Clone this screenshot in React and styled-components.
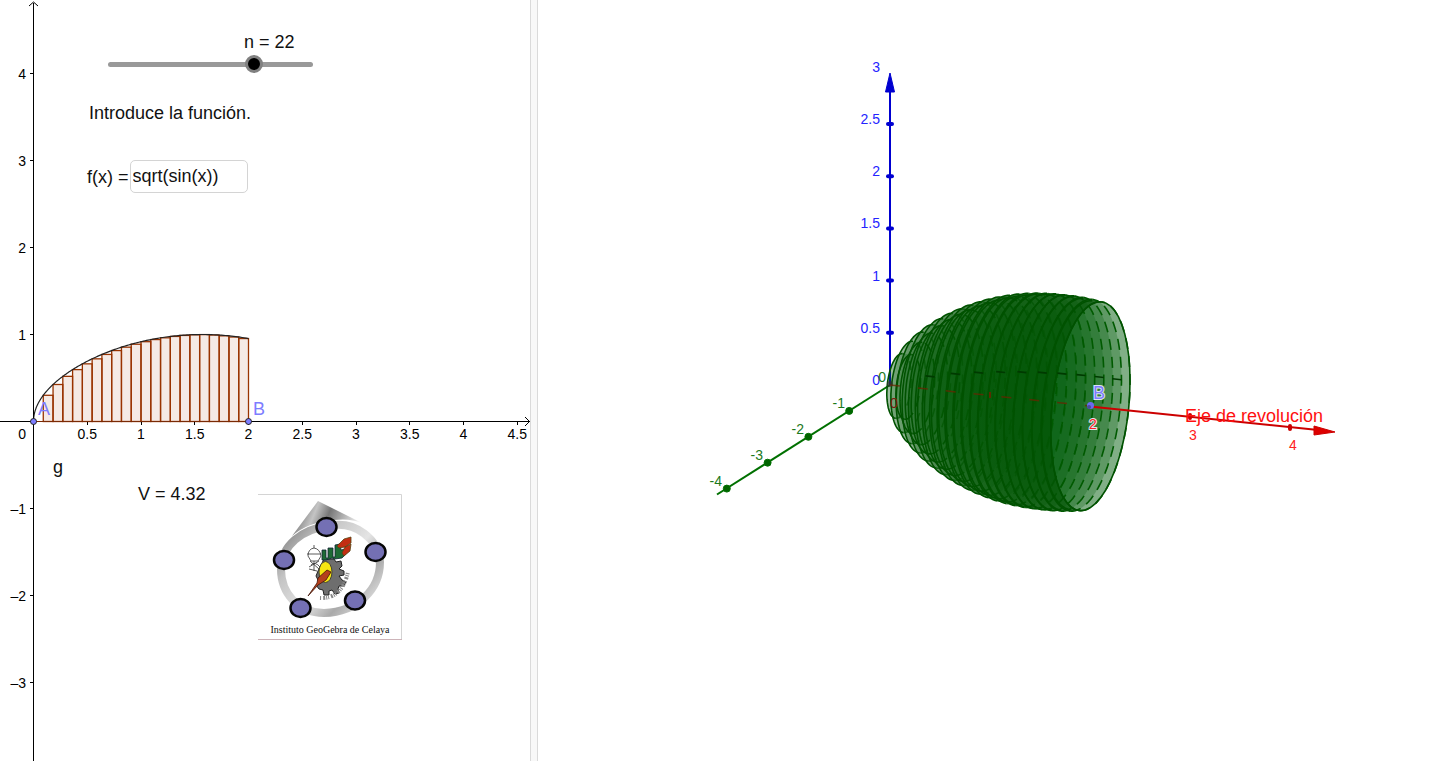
import { useState } from "react";
import styled, { createGlobalStyle } from "styled-components";

const GlobalStyle = createGlobalStyle`
	body {
		margin: 0;
		background: #fff;
		font-family: "Liberation Sans", Arial, sans-serif;
		font-size: 18px;
		line-height: 20px;
		color: #111;
	}
`;

const END = 2;
const f = (x) => Math.sqrt(Math.max(Math.sin(x), 0));

// h: height of the lower sum bar, r: radius of the disc
const getSteps = (n) =>
	Array.from({ length: n }, (_, i) => {
		const from = (END * i) / n;
		const to = (END * (i + 1)) / n;
		return { from, to, h: Math.min(f(from), f(to)), r: f(from) };
	});

const px = (x) => 33.5 + x * 107.5;
const py = (y) => 421.5 - y * 87;

const PlaneGraph = ({ steps }) => {
	const curve = Array.from({ length: 201 }, (_, i) => {
		const x = END * (i / 200) ** 2;
		return `${px(x).toFixed(2)},${py(f(x)).toFixed(2)}`;
	}).join(" ");
	return (
		<Canvas role='img' aria-label='g'>
			<g fill='#993300' fillOpacity='0.1' stroke='#993300' strokeWidth='1.3'>
				{steps.map(({ from, to, h }) => (
					<rect
						key={from}
						x={px(from)}
						y={py(h)}
						width={px(to) - px(from)}
						height={h * 87}
					/>
				))}
			</g>
			<polyline points={curve} fill='none' stroke='#222' strokeWidth='1.2' />
			<g stroke='#000' fill='none'>
				<path d='M33.5 3V761M0 421.5H530' shapeRendering='crispEdges' />
				<path d='M29 6L33.5 2L38 6M525 417L529.5 421.5L525 426' />
				{[-3, -2, -1, 1, 2, 3, 4].map((v) => (
					<path key={v} d={`M30 ${py(v)}h3`} shapeRendering='crispEdges' />
				))}
				{[1, 2, 3, 4, 5, 6, 7, 8, 9].map((v) => (
					<path key={v} d={`M${px(v / 2)} 422v3`} shapeRendering='crispEdges' />
				))}
			</g>
			<line x1='33' x2='249' y1='421.5' y2='421.5' stroke='#7a2a05' />
			<AxisText fill='#000' textAnchor='end'>
				{[-3, -2, -1, 1, 2, 3, 4].map((v) => (
					<text key={v} x='26' y={py(v) + 5}>
						{v < 0 ? `–${-v}` : v}
					</text>
				))}
				<text x='26' y='439'>
					0
				</text>
			</AxisText>
			<AxisText fill='#000' textAnchor='middle'>
				{[1, 2, 3, 4, 5, 6, 7, 8, 9].map((v) => (
					<text key={v} x={px(v / 2)} y='439'>
						{v / 2}
					</text>
				))}
			</AxisText>
			<g fill='#7d7dff' stroke='#222'>
				<circle cx='33.5' cy='421.5' r='3' />
				<circle cx='248.5' cy='421.5' r='3' />
			</g>
			<PointText fill='#7d7dff'>
				<text x='38' y='415'>
					A
				</text>
				<text x='253' y='415'>
					B
				</text>
			</PointText>
		</Canvas>
	);
};

// screen position of a space point
const project = (x, y, z) => [
	352 + x * 100.2 + y * 40.8,
	385 + x * 10.6 - y * 25.9 - z * 104.4,
];

const arc = (x, r, a, b) => {
	const pts = [];
	for (let i = 0; i <= 48; i++) {
		const t = a + ((b - a) * i) / 48;
		const [u, v] = project(x, r * Math.cos(t), r * Math.sin(t));
		pts.push(`${u.toFixed(1)} ${v.toFixed(1)}`);
	}
	return pts;
};

// angles at which the outline of a cylinder touches its rings
const TOP = 1.289;
const BOTTOM = TOP + Math.PI;

const hull = ({ from, to, r }) =>
	`M${[...arc(from, r, TOP, BOTTOM), ...arc(to, r, BOTTOM - 2 * Math.PI, TOP)].join("L")}Z`;
const line = (pts) => `M${pts.join("L")}`;

const Solid = ({ steps }) => {
	const drawn = steps.filter((s) => s.r > 0);
	const last = drawn[drawn.length - 1];
	const mouth = line(arc(last.to, last.r, 0, 2 * Math.PI)) + "Z";
	return (
		<g>
			<defs>
				<linearGradient
					id='depth'
					gradientUnits='userSpaceOnUse'
					x1='352'
					y1='0'
					x2='552'
					y2='0'
				>
					<stop offset='0' stopColor='#005000' stopOpacity='0.15' />
					<stop offset='0.35' stopColor='#025404' stopOpacity='0.6' />
					<stop offset='0.6' stopColor='#025404' stopOpacity='0.75' />
					<stop offset='1' stopColor='#025404' stopOpacity='0.75' />
				</linearGradient>
				<mask id='outside'>
					<rect width='900' height='763' fill='#fff' />
					<path d={mouth} fill='#000' />
				</mask>
				<clipPath id='body'>
					{drawn.map((s) => (
						<path key={s.from} d={hull(s)} />
					))}
				</clipPath>
			</defs>
			{drawn.map((s) => (
				<path key={s.from} d={hull(s)} fill='#055f10' fillOpacity='0.27' />
			))}
			<path d={mouth} fill='#055f10' fillOpacity='0.32' />
			<g fill='none' stroke='#005a00' strokeWidth='1.6'>
				{drawn.map((s) => (
					<path
						key={s.from}
						d={line(arc(s.to, s.r, TOP - Math.PI, TOP))}
						strokeDasharray='11 7'
					/>
				))}
				{drawn.slice(0, -4).map((s) => (
					<path
						key={s.from}
						d={line(arc(s.from, s.r, TOP - Math.PI, TOP))}
						strokeDasharray='9 9'
						strokeOpacity='0.7'
					/>
				))}
			</g>
			<rect
				width='900'
				height='763'
				fill='url(#depth)'
				clipPath='url(#body)'
				mask='url(#outside)'
			/>
			<g fill='none' stroke='#005200' strokeWidth='1.6'>
				{drawn.map((s) => (
					<path key={s.from} d={line(arc(s.from, s.r, TOP, BOTTOM))} />
				))}
				{drawn.map((s) => (
					<path key={s.from} d={line(arc(s.to, s.r, TOP, BOTTOM))} />
				))}
				<path d={mouth} />
				{drawn.map((s, i) => {
					const [x1, y1] = project(s.from, s.r, 0);
					const [x2, y2] = project(s.to, s.r, 0);
					return (
						i % 2 === 1 && (
							<path
								key={s.from}
								stroke='#003a00'
								d={`M${x1} ${y1}L${x2} ${y2}`}
							/>
						)
					);
				})}
			</g>
		</g>
	);
};

const SpaceGraph = ({ steps }) => (
	<Canvas role='img' aria-label='Eje de revolución'>
		<g stroke='#0000d0' strokeWidth='2'>
			<path d='M352 385V90' />
			<path d='M347.500 92L352 73L356.500 92Z' fill='#0000d0' strokeWidth='1' />
			{[1, 2, 3, 4, 5].map((v) => {
				const [x, y] = project(0, 0, v / 2);
				return (
					<path
						key={v}
						d={`M${x - 2} ${y}h4`}
						strokeWidth='4'
						strokeLinecap='round'
					/>
				);
			})}
		</g>
		<g stroke='#007000' fill='#006400'>
			<path d='M179 494.500L352 385' strokeWidth='2' />
			{[-1, -2, -3, -4].map((v) => {
				const [x, y] = project(0, v, 0);
				return <circle key={v} cx={x} cy={y} r='3.500' />;
			})}
		</g>
		<AxisText fill='#2424ff' textAnchor='end'>
			{[0, 1, 2, 3, 4, 5, 6].map((v) => (
				<text key={v} x='342' y={project(0, 0, v / 2)[1]}>
					{v / 2}
				</text>
			))}
		</AxisText>
		<Solid steps={steps} />
		<circle cx='352' cy='384' r='3' fill='#333' fillOpacity='0.7' />
		<AxisText fill='#1c7a1c' textAnchor='end'>
			{[0, -1, -2, -3, -4].map((v) => (
				<text key={v} x={348 + v * 41} y={382 - v * 26}>
					{v}
				</text>
			))}
		</AxisText>
		<path
			d='M352 385L552 406'
			stroke='#6a2400'
			strokeOpacity='0.75'
			strokeWidth='1.500'
			strokeDasharray='10 18'
		/>
		<path d='M452 392v6' stroke='#5a2c00' strokeWidth='2' />
		<g stroke='#cc0000' fill='#dd0000'>
			<path d='M552 406.500L780 430' strokeWidth='2' />
			<path d='M776 426L797 432L776 435Z' strokeWidth='1' />
			<path
				d='M652 415v3M752 426v3'
				strokeWidth='4'
				strokeLinecap='round'
			/>
		</g>
		<AxisText fill='#ff2020' textAnchor='middle'>
			<text x='356' y='408' fill='#7c1a10'>
				0
			</text>
			<OutlinedText x='555' y='429'>
				2
			</OutlinedText>
			<text x='655' y='440'>
				3
			</text>
			<text x='755' y='450'>
				4
			</text>
		</AxisText>
		<PointText fill='#ff1010'>
			<text x='647' y='422'>
				Eje de revolución
			</text>
			<OutlinedText x='555' y='399' fill='#7d7dff'>
				B
			</OutlinedText>
		</PointText>
		<circle cx='552.500' cy='405.500' r='3.500' fill='#6a6af0' />
		<circle cx='551' cy='407' r='2' fill='#4a4a9a' />
	</Canvas>
);

const Logo = () => (
	<svg width='144' height='146' role='img' aria-label='GeoGebra'>
		<defs>
			<linearGradient id='roof' x1='0' x2='1' y1='0.4' y2='0.6'>
				<stop offset='0' stopColor='#666' />
				<stop offset='0.3' stopColor='#c4c4c4' />
				<stop offset='0.5' stopColor='#777' />
				<stop offset='1' stopColor='#fff' />
			</linearGradient>
			<linearGradient id='ring' x1='0' x2='1' y1='0' y2='0.8'>
				<stop offset='0' stopColor='#777' />
				<stop offset='0.3' stopColor='#c4c4c4' />
				<stop offset='0.6' stopColor='#e4e4e4' />
				<stop offset='0.8' stopColor='#aaa' />
				<stop offset='1' stopColor='#ddd' />
			</linearGradient>
		</defs>
		<path d='M0 .5H143.500V146' fill='none' stroke='#d4d4d4' />
		<path d='M0 145.500H144' stroke='#cdb4b9' />
		<path d='M60 7L34 42Q50 28 76 26Q92 24 104 29Z' fill='url(#roof)' />
		<path
			d='M70 32C98 26 121 46 122 68C122 95 100 118 66 119C40 119 23 99 23 75C23 51 45 35 70 32Z'
			fill='none'
			stroke='url(#ring)'
			strokeWidth='8'
		/>
		<g fill='#7470b4' stroke='#050505' strokeWidth='2.500'>
			<ellipse cx='68.500' cy='33' rx='10' ry='9' />
			<ellipse cx='26' cy='66' rx='10' ry='9' />
			<ellipse cx='117.500' cy='58' rx='10' ry='9' />
			<ellipse cx='42.500' cy='114' rx='10' ry='9' />
			<ellipse cx='97' cy='106.500' rx='10' ry='9' />
		</g>
		<path
			d='M64 69l2-4h10l2 3 5-1 1 5-3 3 5 2v4l-5 1 3 4 4 2-2 4-5 0-1 3 1 4-4 1-3-4-3 1 0 4-5 0-1-5-4-1-3-4 3-3-3-6 2-5z'
			fill='#6e6e6e'
			stroke='#222'
		/>
		<ellipse
			cx='67.500'
			cy='78'
			rx='6.500'
			ry='10.500'
			fill='#f7e611'
			stroke='#443'
		/>
		<path
			d='M50 102L59 89L60 84L69 76L73 78L68 86L60 91Z'
			fill='#b5401c'
			stroke='#401508'
			strokeWidth='0.800'
		/>
		<path
			d='M64 66V56h4v8h2V54h5v9h2V51l5-1 1 6 4-1 1 5-4 4-7 1-3-1-6 2z'
			fill='#1d6b34'
			stroke='#123'
			strokeWidth='0.800'
		/>
		<path
			d='M79 52L86 45L93 43L93 49L87 53L81 54ZM84 59L87 53L93 50L92 57L86 62Z'
			fill='#c22e12'
			stroke='#541'
			strokeWidth='0.800'
		/>
		<g fill='none' stroke='#333' strokeWidth='0.800'>
			<path d='M50 62Q50 55 56 54Q62 55 63 62L60 67H53ZM49 60H63M56 51V54' />
			<path d='M52 67L61 75M61 67L51 73M53 71q4-4 9 2M51 75l8 2M56 67v10' />
			<path
				d='M62 104Q84 105 90 78'
				strokeWidth='4'
				strokeDasharray='1 2 2 1 1 1'
				stroke='#888'
			/>
		</g>
		<Caption x='72' y='139' textAnchor='middle'>
			Instituto GeoGebra de Celaya
		</Caption>
	</svg>
);

const App = () => {
	const [n, setN] = useState(22);
	const [formula, setFormula] = useState("sqrt(sin(x))");
	const steps = getSteps(Math.max(n, 2));
	return (
		<Page>
			<GlobalStyle />
			<View>
				<PlaneGraph steps={steps} />
				<Controls>
					<SliderLabel htmlFor='n'>n = {n}</SliderLabel>
					<Slider
						id='n'
						type='range'
						min='0'
						max='30'
						value={n}
						onChange={(e) => setN(Number(e.target.value))}
					/>
					<Prompt>Introduce la función.</Prompt>
					<Field>
						<label htmlFor='formula'>f(x) =</label>
						<FormulaInput
							id='formula'
							value={formula}
							onChange={(e) => setFormula(e.target.value)}
						/>
					</Field>
				</Controls>
				<Pin $left={53} $top={457}>
					g
				</Pin>
				<Pin $left={138} $top={484}>
					V = 4.32
				</Pin>
				<Pin $left={258} $top={494}>
					<Logo />
				</Pin>
			</View>
			<Divider />
			<View>
				<SpaceGraph steps={steps} />
			</View>
		</Page>
	);
};

const Page = styled.main`
	display: grid;
	grid-template-columns: 37fr 8px 63fr;
	box-sizing: border-box;
	min-height: 100vh;
	padding-bottom: 2px;
`;

const View = styled.section`
	position: relative;
	display: grid;
	min-width: 0;
	overflow: hidden;
`;

const Divider = styled.div`
	background: #f8f8f8;
	border: solid #dadada;
	border-width: 0 1px;
`;

const Canvas = styled.svg`
	grid-area: 1 / 1;
	width: 100%;
	height: 100%;
`;

const Controls = styled.div`
	grid-area: 1 / 1;
	position: relative;
	display: flex;
	flex-direction: column;
	align-items: flex-start;
	align-self: start;
	padding: 32px 0 0 87px;
`;

const SliderLabel = styled.label`
	margin-left: 157px;
`;

const Slider = styled.input`
	appearance: none;
	width: 205px;
	height: 18px;
	margin: 3px 0 0 21px;
	background: transparent;
	&::-webkit-slider-runnable-track {
		height: 5px;
		border-radius: 3px;
		background: #999;
	}
	&::-webkit-slider-thumb {
		appearance: none;
		box-sizing: border-box;
		width: 18px;
		height: 18px;
		margin-top: -7px;
		border: 3px solid #808080;
		border-radius: 50%;
		background: #000;
	}
`;

const Prompt = styled.p`
	margin: 30px 0 0 2px;
`;

const Field = styled.div`
	display: flex;
	align-items: center;
	gap: 1px;
	margin-top: 37px;
`;

const FormulaInput = styled.input`
	box-sizing: border-box;
	width: 118px;
	height: 33px;
	padding: 0 2px;
	border: 1px solid #d4d4d4;
	border-radius: 5px;
	background: #fff;
	color: inherit;
	font: inherit;
`;

const Pin = styled.div`
	position: absolute;
	left: ${({ $left }) => $left}px;
	top: ${({ $top }) => $top}px;
	svg {
		display: block;
	}
`;

const AxisText = styled.g`
	font-size: 14px;
`;

const PointText = styled.g`
	font-size: 18px;
`;

const OutlinedText = styled.text`
	paint-order: stroke;
	stroke: #dce6f0;
	stroke-width: 2px;
`;

const Caption = styled.text`
	font-family: "Liberation Serif", "Times New Roman", serif;
	font-size: 10px;
	fill: #111;
`;

export default App;
